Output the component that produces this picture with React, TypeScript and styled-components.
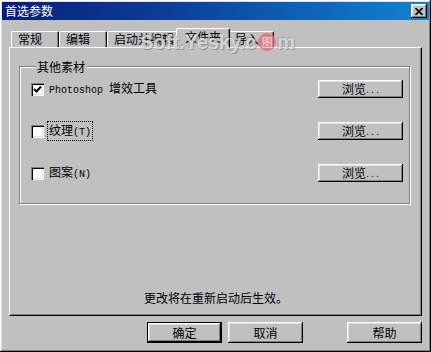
import React from "react";
import styled, { createGlobalStyle } from "styled-components";

const Global = createGlobalStyle`
  html, body { margin: 0; padding: 0; background: #c0c0c0; }
  body { font-family: "Noto Sans CJK SC", "Noto Sans", sans-serif; font-size: 12px; color: #000; }
  * { box-sizing: border-box; }
`;

const raised = `
  box-shadow: inset -1px -1px 0 #000, inset 1px 1px 0 #fff, inset -2px -2px 0 #808080, inset 2px 2px 0 #dfdfdf;
`;

const Window = styled.div`
  position: relative;
  width: 431px;
  height: 352px;
  padding: 2px;
  background: #c0c0c0;
  display: flex;
  flex-direction: column;
  overflow: hidden;
  ${raised}
`;

const TitleBar = styled.div`
  height: 18px;
  flex: none;
  display: flex;
  align-items: center;
  justify-content: space-between;
  padding: 0 2px 0 3px;
  background: linear-gradient(to right, #0a1e78 0%, #0c3f9a 40%, #1084d0 100%);
  color: #fff;
  font-size: 12px;
  line-height: 18px;
  letter-spacing: 0;
`;

const CloseButton = styled.div`
  width: 16px;
  height: 14px;
  background: #c0c0c0;
  display: flex;
  align-items: center;
  justify-content: center;
  ${raised}
`;

const Body = styled.div`
  flex: 1;
  display: flex;
  flex-direction: column;
  padding: 8px 7px 0 7px;
`;

const TabStrip = styled.div`
  height: 19px;
  display: flex;
  align-items: flex-end;
  padding-left: 2px;
  position: relative;
  z-index: 1;
`;

const Tab = styled.div<{ $w: number; $active?: boolean }>`
  width: ${(p) => p.$w + (p.$active ? 4 : 0)}px;
  height: ${(p) => (p.$active ? 20 : 16)}px;
  margin: ${(p) => (p.$active ? "0 -2px -1px -2px" : "0")};
  background: #c0c0c0;
  border-top: 1px solid #fff;
  border-left: 1px solid #fff;
  border-right: 1px solid #000;
  border-radius: 2px 2px 0 0;
  box-shadow: inset -1px 0 0 #808080;
  padding: ${(p) => (p.$active ? "1px 0 0 8px" : "0 0 0 6px")};
  font-size: 12px;
  line-height: 14px;
  white-space: nowrap;
  position: relative;
  z-index: ${(p) => (p.$active ? 2 : 1)};
`;

const Panel = styled.div`
  height: 269px;
  flex: none;
  display: flex;
  flex-direction: column;
  border-top: 1px solid #fff;
  border-left: 1px solid #fff;
  border-right: 1px solid #000;
  border-bottom: 1px solid #000;
  box-shadow: inset -1px -1px 0 #808080;
  padding: 12px 0 10px 9px;
`;

const Group = styled.fieldset`
  width: 391px;
  margin: 0;
  padding: 7px 6px 22px 11px;
  border: 1px solid #808080;
  box-shadow: 1px 1px 0 #fff, inset 1px 1px 0 #fff;
  display: flex;
  flex-direction: column;
  gap: 25px;
`;

const Legend = styled.legend`
  margin-left: 5px;
  padding: 0 2px 0 1px;
  background: #c0c0c0;
  font-size: 12px;
  line-height: 13px;
  position: relative;
`;

const Row = styled.div`
  height: 17px;
  display: flex;
  align-items: center;
`;

const CheckBox = styled.div`
  width: 13px;
  height: 13px;
  flex: none;
  background: #fff;
  box-shadow: inset 1px 1px 0 #808080, inset 2px 2px 0 #000, inset -1px -1px 0 #fff, inset -2px -2px 0 #dfdfdf;
  display: flex;
  align-items: center;
  justify-content: center;
  margin-top: 1px;
`;

const Label = styled.span<{ $focus?: boolean }>`
  margin-left: 4px;
  padding: 1px 1px;
  font-size: 12px;
  line-height: 13px;
  outline: ${(p) => (p.$focus ? "1px dotted #000" : "none")};
  outline-offset: 0;
  white-space: nowrap;
`;

const Mono = styled.span`
  font-family: "Liberation Mono", "DejaVu Sans Mono", monospace;
  font-size: 10px;
`;

const Spacer = styled.div`
  flex: 1;
`;

const BrowseButton = styled.div`
  width: 85px;
  height: 18px;
  flex: none;
  background: #c0c0c0;
  display: flex;
  align-items: center;
  justify-content: center;
  font-size: 12px;
  line-height: 14px;
  padding-left: 2px;
  ${raised}
`;

const Dots = styled.span`
  letter-spacing: 2px;
  font-family: "Liberation Sans", sans-serif;
  font-size: 11px;
  color: #202020;
`;

const Notice = styled.div`
  margin-top: auto;
  text-align: center;
  font-size: 12px;
  line-height: 14px;
  padding-right: 8px;
`;

const ButtonRow = styled.div`
  display: flex;
  justify-content: flex-end;
  padding: 6px 0 0 0;
`;

const DialogButton = styled.div<{ $default?: boolean; $gap?: number }>`
  width: 75px;
  height: 21px;
  margin-left: ${(p) => p.$gap ?? 0}px;
  background: #c0c0c0;
  display: flex;
  align-items: center;
  justify-content: center;
  font-size: 12px;
  line-height: 14px;
  border: ${(p) => (p.$default ? "1px solid #000" : "none")};
  ${raised}
`;

const Watermark = styled.div`
  position: absolute;
  left: 140px;
  top: 31px;
  display: flex;
  align-items: center;
  font-family: "Liberation Sans", sans-serif;
  font-weight: bold;
  font-size: 20px;
  line-height: 22px;
  color: rgba(235, 235, 235, 0.75);
  text-shadow: 1px 1px 0 rgba(110, 110, 110, 0.55), -1px -1px 0 rgba(110, 110, 110, 0.35);
  pointer-events: none;
  z-index: 5;
`;

const Stamp = styled.span`
  width: 18px;
  height: 18px;
  margin: 0 1px 0 2px;
  border-radius: 50%;
  background: rgba(225, 110, 120, 0.8);
  color: rgba(255, 230, 230, 0.9);
  font-family: "Noto Sans CJK SC", sans-serif;
  font-size: 11px;
  font-weight: normal;
  line-height: 18px;
  text-align: center;
  text-shadow: none;
`;

const CheckMark = () => (
  <svg width="9" height="9" viewBox="0 0 9 9">
    <polyline points="1,4 3.5,6.5 8,1.5" fill="none" stroke="#000" strokeWidth="2" />
  </svg>
);

const CloseIcon = () => (
  <svg width="8" height="7" viewBox="0 0 8 7">
    <path d="M0.5 0 L7.5 7 M7.5 0 L0.5 7" stroke="#000" strokeWidth="1.6" />
  </svg>
);

const tabs = [
  { label: "常规", w: 48 },
  { label: "编辑", w: 48 },
  { label: "启动并编辑", w: 71 },
  { label: "文件夹", w: 50, active: true },
  { label: "导入", w: 46 },
];

export default function App() {
  return (
    <>
      <Global />
      <Window>
        <TitleBar>
          <span>首选参数</span>
          <CloseButton>
            <CloseIcon />
          </CloseButton>
        </TitleBar>
        <Body>
          <TabStrip>
            {tabs.map((t) => (
              <Tab key={t.label} $w={t.w} $active={t.active}>
                {t.label}
              </Tab>
            ))}
          </TabStrip>
          <Panel>
            <Group>
              <Legend>其他素材</Legend>
              <Row>
                <CheckBox>
                  <CheckMark />
                </CheckBox>
                <Label>
                  <Mono>Photoshop </Mono>增效工具
                </Label>
                <Spacer />
                <BrowseButton>
                  浏览<Dots>...</Dots>
                </BrowseButton>
              </Row>
              <Row>
                <CheckBox />
                <Label $focus>
                  纹理<Mono>(T)</Mono>
                </Label>
                <Spacer />
                <BrowseButton>
                  浏览<Dots>...</Dots>
                </BrowseButton>
              </Row>
              <Row>
                <CheckBox />
                <Label>
                  图案<Mono>(N)</Mono>
                </Label>
                <Spacer />
                <BrowseButton>
                  浏览<Dots>...</Dots>
                </BrowseButton>
              </Row>
            </Group>
            <Notice>更改将在重新启动后生效。</Notice>
          </Panel>
          <ButtonRow>
            <DialogButton $default>确定</DialogButton>
            <DialogButton $gap={6}>取消</DialogButton>
            <DialogButton $gap={44}>帮助</DialogButton>
          </ButtonRow>
        </Body>
        <Watermark>
          Soft.Yesky.c<Stamp>图</Stamp>m
        </Watermark>
      </Window>
    </>
  );
}
